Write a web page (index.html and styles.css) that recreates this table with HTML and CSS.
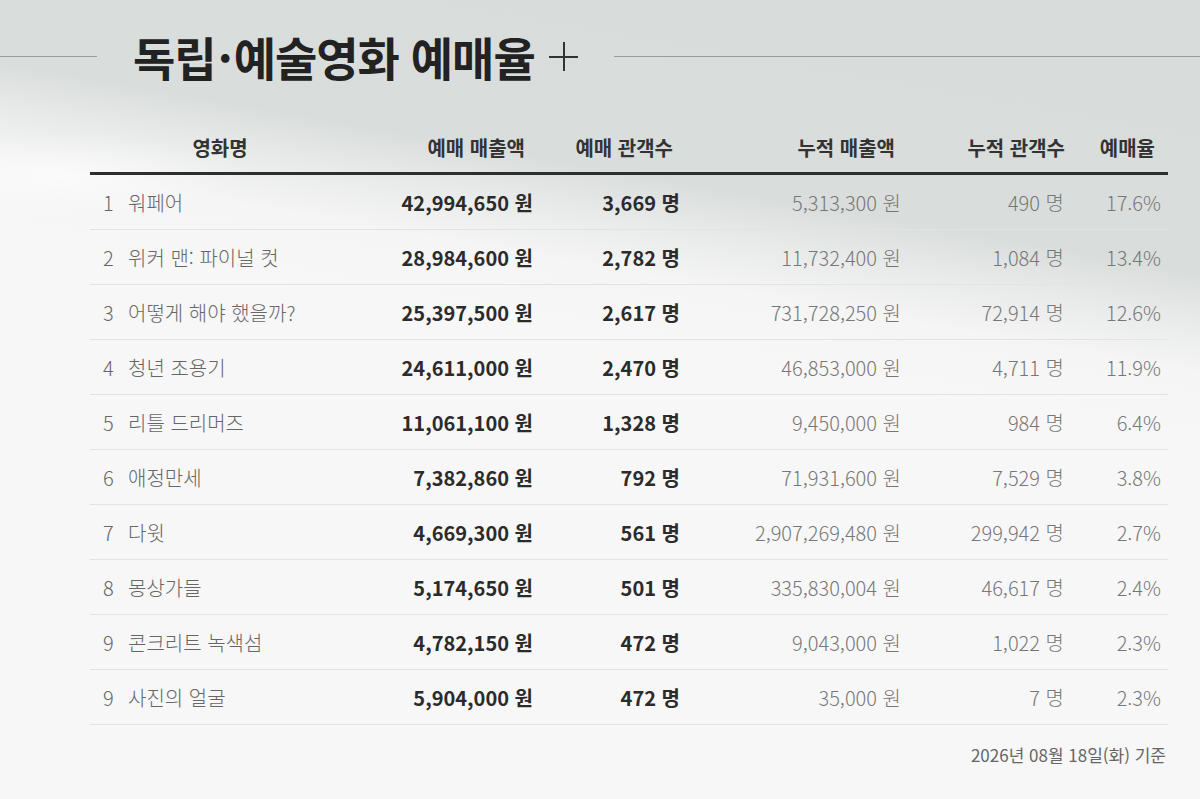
FILE: index.html
```html
<!DOCTYPE html>
<html lang="ko">
<head>
<meta charset="utf-8">
<title>독립·예술영화 예매율</title>
<link rel="stylesheet" href="styles.css">
</head>
<body>
<div class="page">
  <div class="title-row">
    <span class="rule rule-left"></span>
    <h1 class="title">독립<span class="dot">·</span>예술영화 예매율</h1>
    <span class="plus" aria-hidden="true"></span>
    <span class="rule rule-right"></span>
  </div>

  <table class="rank">
    <colgroup>
      <col class="c1"><col class="c2"><col class="c3"><col class="c4"><col class="c5"><col class="c6">
    </colgroup>
    <thead>
      <tr>
        <th class="h-name">영화명</th>
        <th class="h2">예매 매출액</th>
        <th class="h3">예매 관객수</th>
        <th class="h4">누적 매출액</th>
        <th class="h5">누적 관객수</th>
        <th class="h6">예매율</th>
      </tr>
    </thead>
    <tbody>
      <tr><td class="name"><span class="no">1</span>워페어</td><td class="b">42,994,650 원</td><td class="b">3,669 명</td><td class="l">5,313,300 원</td><td class="l">490 명</td><td class="l">17.6%</td></tr>
      <tr><td class="name"><span class="no">2</span>위커 맨: 파이널 컷</td><td class="b">28,984,600 원</td><td class="b">2,782 명</td><td class="l">11,732,400 원</td><td class="l">1,084 명</td><td class="l">13.4%</td></tr>
      <tr><td class="name"><span class="no">3</span>어떻게 해야 했을까?</td><td class="b">25,397,500 원</td><td class="b">2,617 명</td><td class="l">731,728,250 원</td><td class="l">72,914 명</td><td class="l">12.6%</td></tr>
      <tr><td class="name"><span class="no">4</span>청년 조용기</td><td class="b">24,611,000 원</td><td class="b">2,470 명</td><td class="l">46,853,000 원</td><td class="l">4,711 명</td><td class="l">11.9%</td></tr>
      <tr><td class="name"><span class="no">5</span>리틀 드리머즈</td><td class="b">11,061,100 원</td><td class="b">1,328 명</td><td class="l">9,450,000 원</td><td class="l">984 명</td><td class="l">6.4%</td></tr>
      <tr><td class="name"><span class="no">6</span>애정만세</td><td class="b">7,382,860 원</td><td class="b">792 명</td><td class="l">71,931,600 원</td><td class="l">7,529 명</td><td class="l">3.8%</td></tr>
      <tr><td class="name"><span class="no">7</span>다윗</td><td class="b">4,669,300 원</td><td class="b">561 명</td><td class="l">2,907,269,480 원</td><td class="l">299,942 명</td><td class="l">2.7%</td></tr>
      <tr><td class="name"><span class="no">8</span>몽상가들</td><td class="b">5,174,650 원</td><td class="b">501 명</td><td class="l">335,830,004 원</td><td class="l">46,617 명</td><td class="l">2.4%</td></tr>
      <tr><td class="name"><span class="no">9</span>콘크리트 녹색섬</td><td class="b">4,782,150 원</td><td class="b">472 명</td><td class="l">9,043,000 원</td><td class="l">1,022 명</td><td class="l">2.3%</td></tr>
      <tr><td class="name"><span class="no">9</span>사진의 얼굴</td><td class="b">5,904,000 원</td><td class="b">472 명</td><td class="l">35,000 원</td><td class="l">7 명</td><td class="l">2.3%</td></tr>
    </tbody>
  </table>

  <p class="basis">2026년 08월 18일(화) 기준</p>
</div>
</body>
</html>
```

FILE: styles.css
```css
html, body {
  margin: 0;
  padding: 0;
}

body {
  width: 1200px;
  min-height: 799px;
  font-family: "Noto Sans CJK KR", "Noto Sans", sans-serif;
  color: #333;
  background:
    radial-gradient(ellipse 260px 60px at 60px 175px, rgba(255,255,255,0.55), rgba(255,255,255,0) 70%),
    linear-gradient(190deg, #d8dcdb 0%, #d9dddc 27%, #e9ebea 32%, #f4f5f4 37%, #f7f7f7 44%, #f7f7f7 100%);
}

.page {
  padding-top: 28px;
}

.title-row {
  display: flex;
  align-items: center;
  height: 56px;
}

.rule {
  height: 1px;
  background: #9a9c9c;
}

.rule-left {
  width: 97px;
  margin-right: 36px;
}

.rule-right {
  flex: 1;
  margin-left: 36px;
}

.title {
  margin: 0;
  font-size: 46px;
  font-weight: 700;
  letter-spacing: -1px;
  line-height: 56px;
  color: #222;
  white-space: nowrap;
}

.dot {
  margin: 0 2px;
}

.plus {
  position: relative;
  width: 29px;
  height: 29px;
  margin-left: 14px;
}

.plus::before,
.plus::after {
  content: "";
  position: absolute;
  background: #333;
}

.plus::before {
  left: 0;
  right: 0;
  top: 14px;
  height: 2px;
}

.plus::after {
  top: 0;
  bottom: 0;
  left: 14px;
  width: 2px;
}

.rank {
  margin: 38px 0 0 90px;
  width: 1078px;
  border-collapse: collapse;
  table-layout: fixed;
}

.c1 { width: 260px; }
.c2 { width: 191px; }
.c3 { width: 147px; }
.c4 { width: 221px; }
.c5 { width: 163px; }
.c6 { width: 96px; }

.rank th {
  height: 50px;
  padding: 0;
  font-size: 20px;
  font-weight: 700;
  color: #333;
  text-align: right;
  vertical-align: middle;
  border-bottom: 3px solid #2e2e2e;
  white-space: nowrap;
}

.rank th.h-name { text-align: center; }
.rank th.h2 { padding-right: 16px; }
.rank th.h3 { padding-right: 15px; }
.rank th.h4 { padding-right: 14px; }
.rank th.h5 { padding-right: 7px; }
.rank th.h6 { padding-right: 13px; }

.rank td {
  height: 54px;
  padding: 0 8px 0 0;
  font-size: 20px;
  text-align: right;
  vertical-align: middle;
  border-bottom: 1px solid #e2e3e3;
  white-space: nowrap;
}

.rank td.name {
  text-align: left;
  padding-left: 13px;
  color: #666;
  font-weight: 300;
}

.no {
  display: inline-block;
  width: 25px;
}

.rank td.b {
  font-weight: 700;
  color: #2b2b2b;
}

.rank td.l {
  color: #777;
  font-weight: 300;
}

.rank td:last-child {
  padding-right: 7px;
}

.basis {
  margin: 20px 0 0;
  width: 1166px;
  text-align: right;
  font-size: 17px;
  line-height: 20px;
  color: #666;
}
```
